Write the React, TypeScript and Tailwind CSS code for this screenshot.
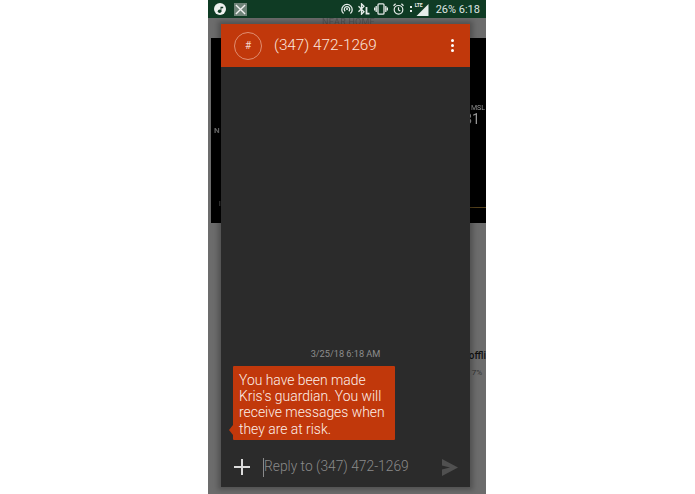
const font = { fontFamily: "Roboto, sans-serif" };

function StatusIcons() {
  return (
    <div className="flex items-center text-[#e6ece9]">
      {/* hotspot */}
      <svg viewBox="0 0 12 12" className="w-[12px] h-[12px]" fill="none" stroke="currentColor" strokeWidth="1.3">
        <path d="M2.6 10.6a5.2 5.2 0 1 1 6.8 0" />
        <path d="M4.2 8.3a2.7 2.7 0 1 1 3.6 0" />
        <circle cx="6" cy="6" r="1" fill="currentColor" stroke="none" />
      </svg>
      {/* bluetooth + battery */}
      <svg viewBox="0 0 12 12" className="w-[12px] h-[12px] ml-[5px]" fill="none" stroke="currentColor" strokeWidth="1.3">
        <path d="M0.5 3.3L6 8.7 3.5 11.2V0.8L6 3.3 0.5 8.7" />
        <path d="M8.5 4v6.6h3" strokeWidth="1.8" />
      </svg>
      {/* vibrate */}
      <svg viewBox="0 0 14 12" className="w-[14px] h-[12px] ml-[4px]" fill="none" stroke="currentColor" strokeWidth="1.3">
        <rect x="4" y="0.8" width="6" height="10.4" rx="1" />
        <path d="M2.2 3v6M11.8 3v6M0.6 4.5v3M13.4 4.5v3" />
      </svg>
      {/* alarm */}
      <svg viewBox="0 0 11 12" className="w-[11px] h-[12px] ml-[5px]" fill="none" stroke="currentColor" strokeWidth="1.2">
        <circle cx="5.5" cy="6.8" r="4.3" />
        <path d="M5.5 4.2v2.8l1.8 1.1M0.5 2.8L2.6 0.8M10.5 2.8L8.4 0.8" />
      </svg>
      <span className="w-[2px] h-[6px] ml-[6px] border-y-2 border-[#e6ece9]" />
      {/* LTE signal */}
      <div className="relative w-[14px] h-[13px] ml-[3px]">
        <svg viewBox="0 0 14 13" className="w-[14px] h-[13px]" fill="currentColor">
          <path d="M13.5 1V13H1.5Z" />
        </svg>
        <span className="absolute left-0 top-[-1px] text-[5px] leading-[6px] font-bold">LTE</span>
      </div>
    </div>
  );
}

function StatusBar() {
  return (
    <div className="h-[18px] shrink-0 bg-[#0f3b24] flex items-center pl-[6px] pr-[6px]">
      <div className="w-[12px] h-[12px] rounded-full bg-[#eef1ef] flex items-center justify-center">
        <svg viewBox="0 0 10 10" className="w-[9px] h-[9px]" fill="#0f3b24">
          <circle cx="4" cy="7" r="2" />
          <path d="M5 2h3v1.6H6V7H5z" />
        </svg>
      </div>
      <div className="w-[13px] h-[13px] ml-[8px] bg-[#6f8479] flex items-center justify-center">
        <svg viewBox="0 0 12 12" className="w-[11px] h-[11px]" stroke="#f0f2f1" strokeWidth="1.5">
          <path d="M1 1l10 10M11 1L1 11" />
        </svg>
      </div>
      <div className="ml-auto flex items-center">
        <StatusIcons />
        <span className="ml-[7px] text-[11px] leading-none text-[#dfe5e2]">26% 6:18</span>
      </div>
    </div>
  );
}

function Backdrop() {
  return (
    <div className="flex-1 bg-[#6c6c6c] flex flex-col pl-[3px]">
      <div className="h-[20px] shrink-0 flex justify-center">
        <span className="text-[9px] leading-[8px] text-[#555] tracking-wide blur-[0.4px]">NEAR HOME</span>
      </div>
      <div className="h-[185px] shrink-0 bg-black flex justify-between">
        <div className="flex pl-[3px] text-[#6e6e6e] blur-[0.4px]">
          <div className="flex flex-col">
            <span className="mt-[88px] text-[8px] leading-[10px] font-bold">N</span>
            <span className="mt-[64px] ml-[5px] text-[7px] leading-[8px]">l</span>
          </div>
          <span className="mt-[77px] ml-[1px] w-[1px] h-[25px] bg-[#3a2f14]" />
        </div>
        <div className="flex flex-col items-end text-[#9a9a9a] blur-[0.3px]">
          <span className="mt-[66px] text-[7px] leading-[8px] pr-[1px] whitespace-nowrap">) MSL</span>
          <span className="text-[14px] leading-[12px] mr-[6px] mt-[1px]">31</span>
          <span className="mt-[82px] w-[16px] h-px bg-[#54411c]" />
        </div>
      </div>
      <div className="mt-[127px] flex flex-col items-end">
        <span className="text-[10px] leading-[12px] font-medium text-[#111] whitespace-nowrap">offli</span>
        <span className="text-[8px] leading-[10px] mt-[6px] mr-[4px] text-[#333]">7%</span>
      </div>
    </div>
  );
}

function Dialog() {
  return (
    <div className="absolute left-[13px] top-[24px] w-[249px] h-[463px] bg-[#2b2b2b] flex flex-col shadow-[0_0_5px_3px_rgba(0,0,0,0.25)]">
      <div className="h-[43px] shrink-0 bg-[#c1380b] flex items-center pl-[13px] pr-[16px]">
        <div className="w-[28px] h-[28px] rounded-full border border-[#e08e72] flex items-center justify-center text-[10px] text-[#f6d9ce]">#</div>
        <span className="ml-[12px] text-[15.3px] leading-none font-light text-[#fbe6dd]">(347) 472-1269</span>
        <div className="ml-auto flex flex-col gap-[2px]">
          <span className="w-[3px] h-[3px] rounded-full bg-white" />
          <span className="w-[3px] h-[3px] rounded-full bg-white" />
          <span className="w-[3px] h-[3px] rounded-full bg-white" />
        </div>
      </div>
      <div className="flex-1 flex flex-col justify-end mb-[7px]">
        <div className="text-center text-[9.2px] leading-[12px] text-[#8d8d8d]">3/25/18 6:18 AM</div>
        <div className="relative mt-[6px] ml-[12px] w-[162px] h-[74px] bg-[#c1380b] rounded-[1px] pl-[6px] pt-[6px] text-[13.9px] leading-[16.2px] font-light text-[#fdf0ea]">
          You have been made Kris's guardian. You will receive messages when they are at risk.
          <span className="absolute left-[-4px] bottom-[5px] w-0 h-0 border-y-[5px] border-y-transparent border-r-[4px] border-r-[#c1380b]" />
        </div>
      </div>
      <div className="h-[40px] shrink-0 flex items-center pl-[13px] pr-[12px]">
        <svg viewBox="0 0 16 16" className="w-[16px] h-[16px]" stroke="#dcdcdc" strokeWidth="2">
          <path d="M8 0v16M0 8h16" />
        </svg>
        <div className="ml-[13px] w-px h-[19px] bg-[#8a8a8a]" />
        <span className="text-[13.8px] leading-none font-light text-[#8a8a8a]">Reply to (347) 472-1269</span>
        <svg viewBox="0 0 16 17" className="ml-auto w-[16px] h-[17px]" fill="#505050">
          <path d="M0 0L16 8.5L0 17V10.5L8 8.5L0 6.5Z" />
        </svg>
      </div>
    </div>
  );
}

export default function App() {
  return (
    <div className="w-[695px] h-[494px] bg-white overflow-hidden" style={font}>
      <div className="relative ml-[208px] w-[278px] h-[494px] flex flex-col">
        <StatusBar />
        <Backdrop />
        <Dialog />
      </div>
    </div>
  );
}
